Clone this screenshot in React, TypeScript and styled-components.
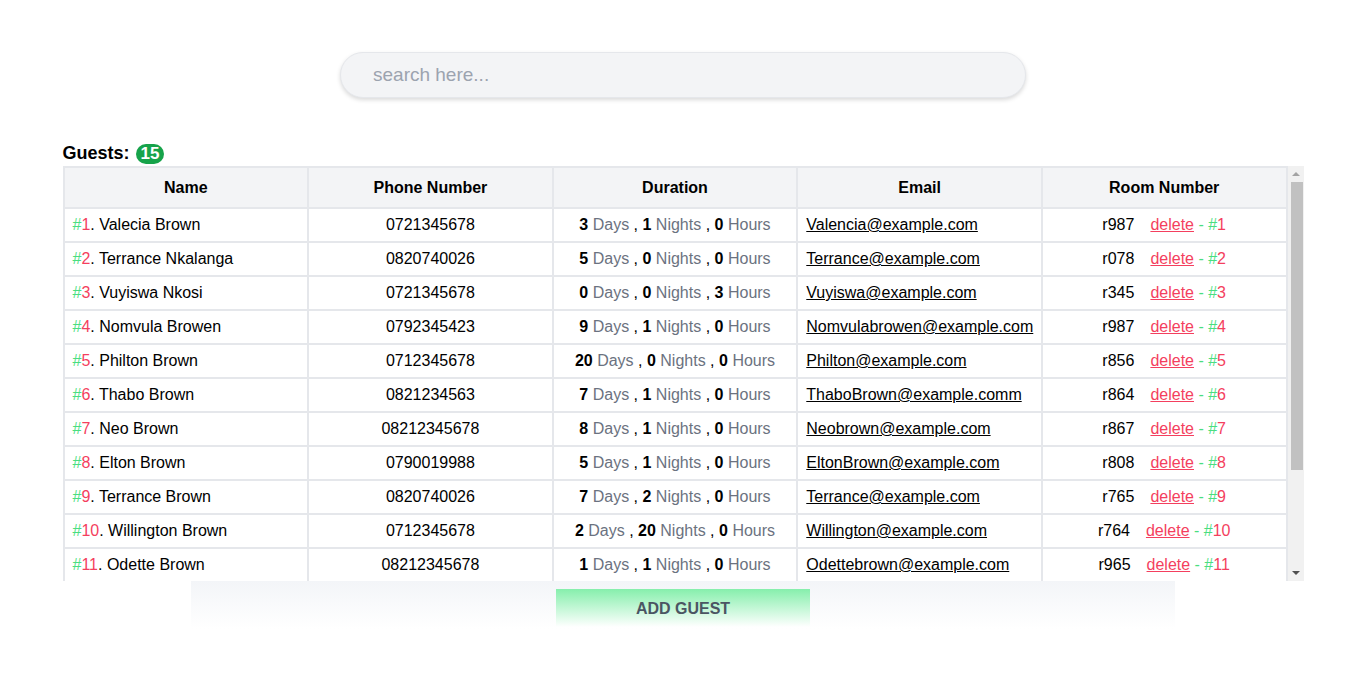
import React from 'react'
import styled, {createGlobalStyle} from 'styled-components'

const GlobalStyle = createGlobalStyle`
  body {
    margin: 0;
    background: #ffffff;
    font-family: "Liberation Sans", Arial, sans-serif;
    color: #000000;
  }
`

const Page = styled.div`
  display: flex;
  flex-direction: column;
  align-items: center;
  padding-top: 52px;
`

const SearchInput = styled.input`
  width: 686px;
  height: 46px;
  box-sizing: border-box;
  border-radius: 999px;
  border: 1px solid #e5e7eb;
  background: #f3f4f6;
  box-shadow: 0 2px 4px rgba(0, 0, 0, 0.15);
  padding: 0 32px;
  font-size: 19px;
  font-family: "Liberation Sans", Arial, sans-serif;
  outline: none;

  &::placeholder {
    color: #9ca3af;
  }
`

const Section = styled.div`
  width: 1241px;
  margin-top: 42px;
  display: flex;
  flex-direction: column;
`

const Title = styled.div`
  display: flex;
  align-items: center;
  gap: 6px;
  font-size: 18px;
  font-weight: bold;
  height: 26px;
`

const Badge = styled.span`
  display: inline-flex;
  align-items: center;
  justify-content: center;
  background: #16a34a;
  color: #ffffff;
  border-radius: 999px;
  font-size: 17px;
  font-weight: bold;
  height: 20px;
  padding: 0 5px;
  margin-top: 1px;
`

const Frame = styled.div`
  display: flex;
  height: 415px;
`

const Scroller = styled.div`
  flex: 1;
  overflow-y: auto;
  scrollbar-width: none;

  &::-webkit-scrollbar {
    display: none;
  }
`

const ScrollBar = styled.div`
  width: 16px;
  background: #f1f1f1;
  display: flex;
  flex-direction: column;
  align-items: center;
`

const ScrollArrow = styled.div<{dir: 'up' | 'down'}>`
  height: 16px;
  width: 16px;
  display: flex;
  align-items: center;
  justify-content: center;

  &::after {
    content: '';
    border-left: 4px solid transparent;
    border-right: 4px solid transparent;
    ${({dir}) =>
      dir === 'up' ? 'border-bottom: 4px solid #a3a3a3;' : 'border-top: 4px solid #505050;'}
  }
`

const ScrollTrack = styled.div`
  flex: 1;
  width: 100%;
  display: flex;
  justify-content: center;
`

const ScrollThumb = styled.div`
  width: 12px;
  margin-left: 2px;
  height: 288px;
  background: #c1c1c1;
`

const Table = styled.table`
  width: 100%;
  border-collapse: collapse;
  table-layout: fixed;
  font-size: 16px;
`

const Th = styled.th`
  background: #f3f4f6;
  border: 2px solid #e5e7eb;
  padding: 11px 8px 10px;
  font-weight: bold;
  text-align: center;
  line-height: 18px;
`

const Td = styled.td<{align?: 'left' | 'center'}>`
  border: 2px solid #e5e7eb;
  padding: 7px 8px;
  line-height: 18px;
  text-align: ${({align}) => align || 'center'};
  white-space: nowrap;
`

const Hash = styled.span`
  color: #4ade80;
`

const Num = styled.span`
  color: #f43f5e;
`

const Bold = styled.b``

const Unit = styled.span`
  color: #6b7280;
`

const Mail = styled.a`
  color: #000000;
  text-decoration: underline;
`

const Delete = styled.a`
  color: #f43f5e;
  text-decoration: underline;
  margin-left: 16px;
`

const Dash = styled.span`
  color: #4ade80;
`

const Footer = styled.div`
  width: 984px;
  height: 48px;
  display: flex;
  justify-content: center;
  align-items: flex-start;
  padding-top: 8px;
  box-sizing: border-box;
  background: linear-gradient(180deg, #f3f5f8 0%, #ffffff 100%);
`

const AddButton = styled.button`
  width: 254px;
  height: 38px;
  border: none;
  padding-top: 3px;
  background: linear-gradient(180deg, #86efac 0%, #ffffff 100%);
  color: #4b5563;
  font-family: "Liberation Sans", Arial, sans-serif;
  font-size: 16px;
  font-weight: bold;
  cursor: pointer;
`

type Guest = {
  name: string
  phone: string
  days: number
  nights: number
  hours: number
  email: string
  room: string
}

const guests: Guest[] = [
  {name: 'Valecia Brown', phone: '0721345678', days: 3, nights: 1, hours: 0, email: 'Valencia@example.com', room: 'r987'},
  {name: 'Terrance Nkalanga', phone: '0820740026', days: 5, nights: 0, hours: 0, email: 'Terrance@example.com', room: 'r078'},
  {name: 'Vuyiswa Nkosi', phone: '0721345678', days: 0, nights: 0, hours: 3, email: 'Vuyiswa@example.com', room: 'r345'},
  {name: 'Nomvula Browen', phone: '0792345423', days: 9, nights: 1, hours: 0, email: 'Nomvulabrowen@example.com', room: 'r987'},
  {name: 'Philton Brown', phone: '0712345678', days: 20, nights: 0, hours: 0, email: 'Philton@example.com', room: 'r856'},
  {name: 'Thabo Brown', phone: '0821234563', days: 7, nights: 1, hours: 0, email: 'ThaboBrown@example.comm', room: 'r864'},
  {name: 'Neo Brown', phone: '08212345678', days: 8, nights: 1, hours: 0, email: 'Neobrown@example.com', room: 'r867'},
  {name: 'Elton Brown', phone: '0790019988', days: 5, nights: 1, hours: 0, email: 'EltonBrown@example.com', room: 'r808'},
  {name: 'Terrance Brown', phone: '0820740026', days: 7, nights: 2, hours: 0, email: 'Terrance@example.com', room: 'r765'},
  {name: 'Willington Brown', phone: '0712345678', days: 2, nights: 20, hours: 0, email: 'Willington@example.com', room: 'r764'},
  {name: 'Odette Brown', phone: '08212345678', days: 1, nights: 1, hours: 0, email: 'Odettebrown@example.com', room: 'r965'},
  {name: 'Sipho Brown', phone: '0721345678', days: 4, nights: 1, hours: 0, email: 'Sipho@example.com', room: 'r412'},
  {name: 'Lerato Brown', phone: '0820740026', days: 2, nights: 0, hours: 5, email: 'Lerato@example.com', room: 'r233'},
  {name: 'Mandla Brown', phone: '0712345678', days: 6, nights: 1, hours: 0, email: 'Mandla@example.com', room: 'r519'},
  {name: 'Zanele Brown', phone: '0790019988', days: 3, nights: 2, hours: 0, email: 'Zanele@example.com', room: 'r610'},
]

export default function App() {
  return (
    <>
      <GlobalStyle />
      <Page>
        <SearchInput placeholder="search here..." />
        <Section>
          <Title>
            Guests: <Badge>{guests.length}</Badge>
          </Title>
          <Frame>
            <Scroller>
              <Table>
                <thead>
                  <tr>
                    <Th>Name</Th>
                    <Th>Phone Number</Th>
                    <Th>Duration</Th>
                    <Th>Email</Th>
                    <Th>Room Number</Th>
                  </tr>
                </thead>
                <tbody>
                  {guests.map((g, i) => (
                    <tr key={i}>
                      <Td align="left">
                        <Hash>#</Hash>
                        <Num>{i + 1}</Num>. {g.name}
                      </Td>
                      <Td>{g.phone}</Td>
                      <Td>
                        <Bold>{g.days}</Bold> <Unit>Days</Unit> , <Bold>{g.nights}</Bold> <Unit>Nights</Unit> ,{' '}
                        <Bold>{g.hours}</Bold> <Unit>Hours</Unit>
                      </Td>
                      <Td align="left">
                        <Mail href="#">{g.email}</Mail>
                      </Td>
                      <Td>
                        {g.room}
                        <Delete href="#">delete</Delete>
                        <Dash> - #</Dash>
                        <Num>{i + 1}</Num>
                      </Td>
                    </tr>
                  ))}
                </tbody>
              </Table>
            </Scroller>
            <ScrollBar>
              <ScrollArrow dir="up" />
              <ScrollTrack>
                <ScrollThumb />
              </ScrollTrack>
              <ScrollArrow dir="down" />
            </ScrollBar>
          </Frame>
        </Section>
        <Footer>
          <AddButton>ADD GUEST</AddButton>
        </Footer>
      </Page>
    </>
  )
}
